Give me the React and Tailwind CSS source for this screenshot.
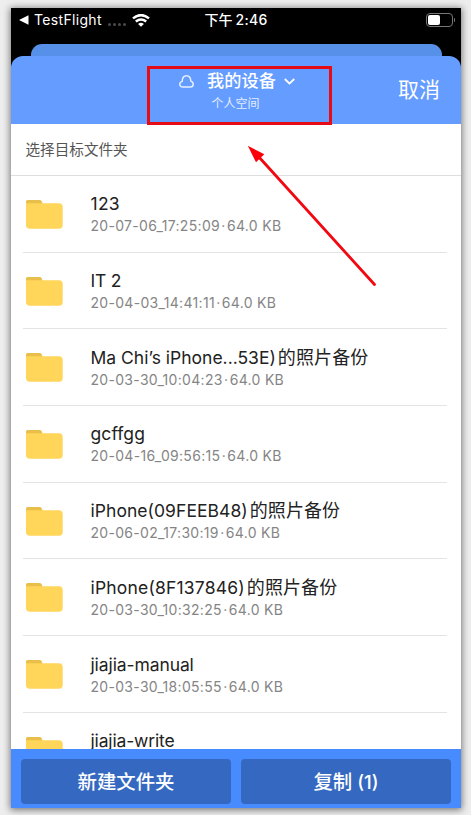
import React from 'react';

const rows = [
  { name: '123', track: 'tracking-[0.3px]', meta: '20-07-06_17:25:09', size: '64.0 KB' },
  { name: 'IT 2', track: 'tracking-[-0.2px]', meta: '20-04-03_14:41:11', size: '64.0 KB' },
  { name: 'Ma Chi’s iPhone...53E)', track: 'tracking-normal', cjk: '的照片备份', meta: '20-03-30_10:04:23', size: '64.0 KB' },
  { name: 'gcffgg', track: 'tracking-[0.1px]', meta: '20-04-16_09:56:15', size: '64.0 KB' },
  { name: 'iPhone(09FEEB48)', track: 'tracking-[0.05px]', cjk: '的照片备份', meta: '20-06-02_17:30:19', size: '64.0 KB' },
  { name: 'iPhone(8F137846)', track: 'tracking-[0.19px]', cjk: '的照片备份', meta: '20-03-30_10:32:25', size: '64.0 KB' },
  { name: 'jiajia-manual', track: 'tracking-[-0.1px]', meta: '20-03-30_18:05:55', size: '64.0 KB' },
  { name: 'jiajia-write', track: 'tracking-[-0.15px]' },
];

function Folder() {
  return (
    <svg className="mt-[24px] h-[29px] w-[37px] shrink-0" viewBox="0 0 37 29">
      <path d="M0 8V1.5Q0 0 1.5 0H14Q15.3 0 15.8 1.5L17 5V8Z" fill="#e9bf4c" />
      <path d="M0 3.2H33Q36.7 3.2 36.7 7V25Q36.7 28.8 33 28.8H4Q0 28.8 0 25Z" fill="#ffd55a" />
    </svg>
  );
}

function Row({ row }) {
  return (
    <div className="ml-[12px] mr-[14px] flex h-[76.7px] shrink-0 border-b border-[#e4e4e4] pl-[3.3px]">
      <Folder />
      <div className="ml-[27.2px] whitespace-nowrap pt-[16.4px]">
        <div className="flex h-[24px] items-center text-[17.5px] leading-[24px] text-[#222]">
          <span className={row.track}>{row.name}</span>
          {row.cjk && <span className="ml-[2px] text-[18px] tracking-[0.1px]">{row.cjk}</span>}
        </div>
        {row.meta && (
          <div className="flex text-[14px] leading-[20px] tracking-[0.31px] text-[#858585]">
            {row.meta}<span className="mx-[1.3px]">·</span>{row.size}
          </div>
        )}
      </div>
    </div>
  );
}

function StatusBar() {
  return (
    <div className="flex h-[36px] shrink-0 items-start justify-between pl-[8px] pr-[6px] text-white">
      <div className="flex h-[24px] w-[150px] items-center">
        <svg className="h-[10px] w-[10px]" viewBox="0 0 10 10">
          <path d="M0 5L9.5 0.3V9.7Z" fill="#fff" />
        </svg>
        <span className="-mt-[2px] ml-[5px] w-[70px] whitespace-nowrap text-[14px] tracking-[0.33px]">TestFlight</span>
        <div className="ml-[4px] mt-[8px] flex gap-[2px]">
          {[0, 1, 2, 3].map((i) => (
            <i key={i} className="h-[3px] w-[3px] rounded-full bg-[#4a4a4a]" />
          ))}
        </div>
        <svg className="ml-[6px] h-[13px] w-[18px]" viewBox="0 0 18 13" fill="none" stroke="#fff">
          <path d="M1 4.4Q9-2.2 17 4.4" strokeWidth="2.5" />
          <path d="M3.8 7.5Q9 3.3 14.2 7.5" strokeWidth="2.4" />
          <path d="M9 12.8L6.1 9.9Q9 7.6 11.9 9.9Z" fill="#fff" stroke="none" />
        </svg>
      </div>
      <span className="-ml-[2px] flex h-[23px] items-center whitespace-nowrap text-[14px] font-medium">
        下午<span className="ml-[3px] tracking-[0.3px]">2:46</span>
      </span>
      <div className="flex h-[24px] w-[150px] items-center justify-end">
        <div className="flex h-[14px] w-[27px] rounded-[4px] border border-[#777] p-[1px]">
          <div className="h-full w-[12px] rounded-[2px] bg-white" />
        </div>
        <div className="ml-[1px] h-[4px] w-[1px] rounded-r bg-[#777]" />
      </div>
    </div>
  );
}

export default function App() {
  return (
    <div className="relative h-[815px] w-[471px] overflow-hidden bg-[#eeeeee] pl-[11px] pt-[8px] font-['Inter','Noto_Sans_CJK_SC',sans-serif]">
      <div className="flex h-[800px] w-[450px] flex-col overflow-hidden bg-black shadow-[0_1px_7px_1px_rgba(0,0,0,0.5)]">
        <StatusBar />
        <div className="mx-[19.5px] h-[12px] shrink-0 rounded-t-[11px] bg-[#5690e8]" />
        <div className="flex h-[67.5px] shrink-0 items-center rounded-t-[12px] bg-[#649cff] text-white">
          <div className="w-[100px]" />
          <div className="flex flex-1 flex-col items-center pt-[2px]">
            <div className="ml-[2px] flex h-[24px] items-center">
              <svg className="h-[13px] w-[15px]" viewBox="0 0 15 13" fill="none" stroke="#e5efff" strokeWidth="1.5" strokeLinejoin="round">
                <path d="M3.8 12C1.9 12 .8 10.8 .8 9.2C.8 7.8 1.8 6.8 3.2 6.4C3.3 3 5 .8 7.5 .8C10 .8 11.7 3 11.8 6.1C13.3 6.6 14.2 7.7 14.2 9.2C14.2 10.8 13 12 11.3 12Z" />
              </svg>
              <span className="ml-[13px] text-[17.2px] font-medium leading-[24px]">我的设备</span>
              <svg className="ml-[8px] h-[7px] w-[11px]" viewBox="0 0 11 7" fill="none" stroke="#fff" strokeWidth="1.8">
                <path d="M.8 1L5.5 5.6L10.2 1" />
              </svg>
            </div>
            <div className="-ml-[1px] mt-[2px] text-[12px] leading-[17px] text-[#e3edff]">个人空间</div>
          </div>
          <div className="w-[100px] pl-[37px] text-[21px]">取消</div>
        </div>
        <div className="flex h-[52.5px] shrink-0 items-center border-b border-[#dedede] bg-white pl-[14.5px] pt-[3px] text-[14.6px] text-[#555]">
          选择目标文件夹
        </div>
        <div className="flex min-h-0 flex-1 flex-col overflow-hidden bg-white">
          {rows.map((row) => <Row key={row.name} row={row} />)}
        </div>
        <div className="flex h-[59px] shrink-0 gap-[10px] bg-[#488bff] px-[10px] pb-[4px] pt-[10px] text-[19.4px] font-medium text-white">
          <button className="flex flex-1 items-center justify-center rounded-[4px] bg-[#3569c1] pt-[2px]">新建文件夹</button>
          <button className="flex flex-1 items-center justify-center rounded-[4px] bg-[#3569c1] pt-[2px]">
            复制<span className="ml-[5px] text-[18.5px]">(1)</span>
          </button>
        </div>
      </div>
      <div className="absolute left-[147px] top-[66px] h-[59px] w-[185px] border-[3px] border-[#e60b15]" />
      <svg className="absolute left-[240px] top-[140px] h-[150px] w-[145px]" viewBox="240 140 145 150">
        <path d="M258 156L374.5 284.5" stroke="#f20810" strokeWidth="2.8" strokeLinecap="round" />
        <path d="M247.8 145.8L264.3 154.3L256 162.2Z" fill="#fb0008" />
      </svg>
    </div>
  );
}
